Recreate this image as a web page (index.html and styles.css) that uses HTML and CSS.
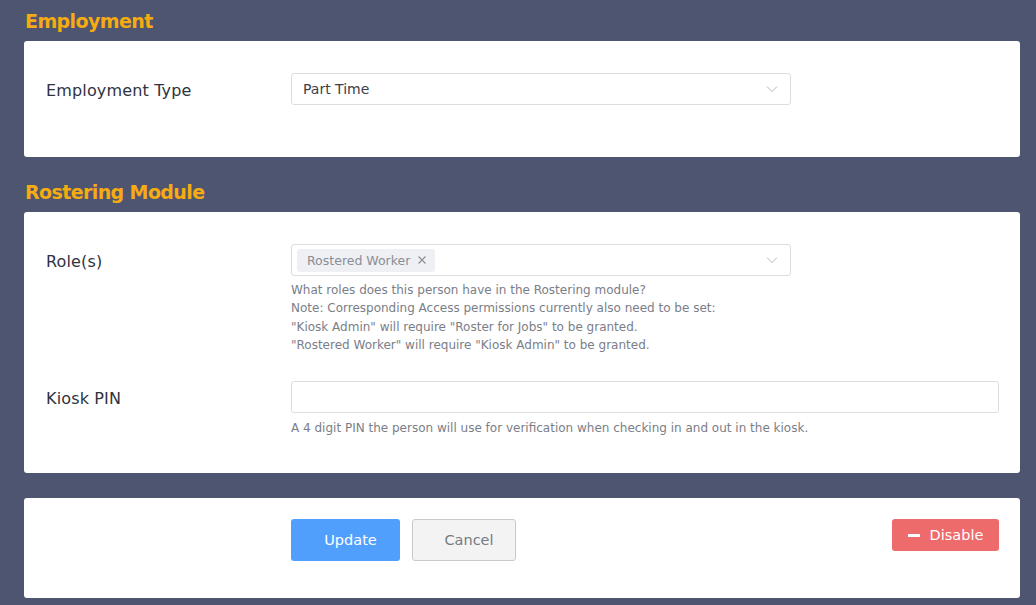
FILE: index.html
```html
<!DOCTYPE html>
<html lang="en">
<head>
    <meta charset="UTF-8">
    <meta name="viewport" content="width=device-width, initial-scale=1.0">
    <title>Person</title>
    <link rel="stylesheet" href="styles.css">
</head>
<body>
    <div class="page">

        <h2 class="section-title">Employment</h2>
        <div class="card card-employment">
            <div class="row">
                <label class="row-label">Employment Type</label>
                <div class="row-field">
                    <div class="select select-short">
                        <span class="select-value">Part Time</span>
                        <svg class="chevron" width="12" height="8" viewBox="0 0 12 8"><path d="M1 1.5 L6 6.5 L11 1.5" fill="none" stroke="#b5b8c0" stroke-width="1"/></svg>
                    </div>
                </div>
            </div>
        </div>

        <h2 class="section-title">Rostering Module</h2>
        <div class="card card-roster">
            <div class="row">
                <label class="row-label">Role(s)</label>
                <div class="row-field">
                    <div class="select select-short select-multi">
                        <span class="tag">Rostered Worker
                            <svg class="tag-x" width="8" height="8" viewBox="0 0 8 8"><path d="M0.5 0.5 L7.5 7.5 M7.5 0.5 L0.5 7.5" stroke="#8a8d96" stroke-width="1.1"/></svg>
                        </span>
                        <svg class="chevron" width="12" height="8" viewBox="0 0 12 8"><path d="M1 1.5 L6 6.5 L11 1.5" fill="none" stroke="#b5b8c0" stroke-width="1"/></svg>
                    </div>
                    <div class="help">
                        What roles does this person have in the Rostering module?<br>
                        Note: Corresponding Access permissions currently also need to be set:<br>
                        "Kiosk Admin" will require "Roster for Jobs" to be granted.<br>
                        "Rostered Worker" will require "Kiosk Admin" to be granted.
                    </div>
                </div>
            </div>
            <div class="row">
                <label class="row-label">Kiosk PIN</label>
                <div class="row-field">
                    <input class="input" type="text">
                    <div class="help help-pin">A 4 digit PIN the person will use for verification when checking in and out in the kiosk.</div>
                </div>
            </div>
        </div>

        <div class="card card-actions">
            <div class="actions-left"></div>
            <div class="actions">
                <button class="btn btn-primary">Update</button>
                <button class="btn btn-default">Cancel</button>
            </div>
            <button class="btn btn-danger"><span class="minus"></span>Disable</button>
        </div>

    </div>
</body>
</html>
```

FILE: styles.css
```css
*{box-sizing: border-box;}
body{
    margin:0;
    background:#4e5571;
    font-family:"DejaVu Sans", sans-serif;
    color:#2f3340;
}

.page{
    padding:10px 16px 0 24px;
}

.section-title{
    margin:0;
    height:31px;
    color:#f6ab10;
    font-size:19px;
    font-weight:bold;
    line-height:22px;
    padding-left:1px;
    letter-spacing:-0.6px;
}

.card{
    background:#fff;
    border-radius:3px;
    padding:32px 21px 32px 22px;
}
.card-employment{
    margin-bottom:24px;
}
.card-roster{
    padding-bottom:36px;
    margin-bottom:25px;
}

.row{
    display:flex;
    align-items:flex-start;
    margin-bottom:20px;
}
.card-roster .row{
    margin-bottom:27px;
}
.card-roster .row:last-child{
    margin-bottom:0;
}
.row-label{
    width:245px;
    flex:none;
    font-size:16px;
    line-height:35px;
    height:32px;
    letter-spacing:0.15px;
}
.row-field{
    flex:1;
}

.select{
    height:32px;
    border:1px solid #dcdde3;
    border-radius:3px;
    display:flex;
    align-items:center;
    padding:0 12px 0 11px;
}
.select-short{
    width:500px;
}
.select-multi{
    padding-left:5px;
}
.select-value{
    flex:1;
    font-size:14px;
    color:#3c404c;
}
.chevron{
    margin-left:auto;
}
.tag{
    background:#eff0f3;
    border-radius:3px;
    height:23px;
    line-height:23px;
    padding:0 9px 0 10px;
    font-size:12.5px;
    color:#8a8d96;
    display:flex;
    align-items:center;
    gap:8px;
}

.help{
    margin-top:5px;
    font-size:12px;
    line-height:18.3px;
    color:#7a7e88;
}
.help-pin{
    margin-top:6px;
}

.input{
    display:block;
    width:100%;
    height:32px;
    border:1px solid #dcdde3;
    border-radius:3px;
    outline:none;
}

.card-actions{
    display:flex;
    align-items:flex-start;
    padding:21px 21px 37px 22px;
}
.actions-left{
    width:245px;
    flex:none;
}
.actions{
    flex:1;
    display:flex;
    gap:12px;
}
.btn{
    font-family:"DejaVu Sans", sans-serif;
    border-radius:3px;
    cursor:pointer;
}
.btn-primary{
    width:109px;
    height:42px;
    background:#519ffd;
    border:none;
    color:#fff;
    font-size:14.5px;
    padding-left:16px;
}
.btn-default{
    width:104px;
    height:42px;
    background:#f3f3f3;
    border:1px solid #c9c9cc;
    color:#777a82;
    font-size:14.5px;
    padding-left:16px;
}
.btn-danger{
    width:107px;
    height:32px;
    background:#ee6b6b;
    border:none;
    color:#fff;
    font-size:14.5px;
    display:flex;
    align-items:center;
    justify-content:center;
    gap:10px;
}
.minus{
    display:inline-block;
    width:12px;
    height:3px;
    background:#fff;
}
```
